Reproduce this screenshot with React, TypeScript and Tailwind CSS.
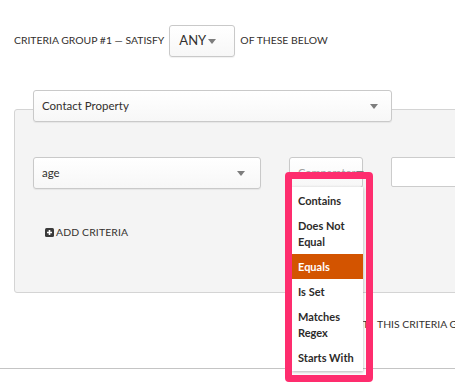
const font = { fontFamily: "Lato, 'Open Sans', sans-serif" };

function Caret() {
  return (
    <svg width="8" height="5" viewBox="0 0 8 5" className="shrink-0">
      <path d="M0 0 L8 0 L4 5 Z" fill="#7d7d7d" />
    </svg>
  );
}

function SelectBox({
  label,
  className,
  textClass,
}: {
  label: string;
  className: string;
  textClass: string;
}) {
  return (
    <div
      className={`flex items-center justify-between rounded-[3px] border border-[#c9c9c9] bg-gradient-to-b from-white to-[#f7f7f7] shadow-[0_1px_1px_rgba(0,0,0,0.06)] ${className}`}
    >
      <span className={`text-[#33302e] ${textClass}`}>{label}</span>
      <Caret />
    </div>
  );
}

export default function App() {
  const options = [
    { label: "Contains" },
    { label: "Does Not Equal" },
    { label: "Equals", active: true },
    { label: "Is Set" },
    { label: "Matches Regex" },
    { label: "Starts With" },
  ];

  return (
    <div
      className="relative h-[392px] w-[455px] overflow-hidden bg-white"
      style={font}
    >
      {/* Group header */}
      <div className="flex items-center pl-[14px] pt-[25px] text-[10.4px] text-[#33302e]">
        <span>CRITERIA GROUP #1 — SATISFY</span>
        <SelectBox
          label="ANY"
          className="ml-[5px] mr-[5px] h-[32px] w-[66px] pl-[9px] pr-[18px]"
          textClass="text-[13px]"
        />
        <span>OF THESE BELOW</span>
      </div>

      {/* Criteria panel */}
      <div className="ml-[14px] mt-[52px] h-[184px] w-[460px] rounded-l-[3px] border border-[#d4d4d4] bg-[#f4f4f4]">
        <SelectBox
          label="Contact Property"
          className="relative z-10 ml-[18px] mt-[-20px] h-[32px] w-[359px] pl-[8px] pr-[13px]"
          textClass="text-[11.5px]"
        />

        <div className="mt-[35px] flex items-start">
          <SelectBox
            label="age"
            className="ml-[18px] h-[32px] w-[228px] pl-[8px] pr-[15px]"
            textClass="text-[11.5px]"
          />

          <div className="relative ml-[28px]">
            <SelectBox
              label="Comparator"
              className="h-[31px] w-[74px] pl-[8px] pr-[6px] pt-[2px]"
              textClass="text-[11px] text-[#a0a0a0]"
            />

            {/* Highlight frame */}
            <div className="absolute left-[-4px] top-[15px] z-20 h-[210px] w-[88px] rounded-[4px] border-[7px] border-[#fe2d6e]" />

            {/* Open dropdown */}
            <div className="absolute left-[3px] top-[30px] z-10 w-[71px] bg-white py-[1px] shadow-[0_1px_3px_rgba(0,0,0,0.3)]">
              {options.map((o) => (
                <div
                  key={o.label}
                  className={`px-[6px] py-[4.5px] text-[11px] font-bold leading-[16px] ${
                    o.active ? "bg-[#d35400] text-white" : "text-[#2d2b2a]"
                  }`}
                >
                  {o.label}
                </div>
              ))}
            </div>
          </div>

          <div className="ml-[28px] h-[30px] w-[80px] rounded-l-[2px] border border-[#cccccc] bg-white" />
        </div>

        <div className="ml-[30px] mt-[36px] flex items-center gap-[2px] text-[10.4px] text-[#33302e]">
          <svg width="9" height="9" viewBox="0 0 9 9">
            <rect width="9" height="9" rx="1.5" fill="#3a3a3a" />
            <path d="M4.5 2v5M2 4.5h5" stroke="white" strokeWidth="1.6" />
          </svg>
          <span className="tracking-[0.15px]">ADD CRITERIA</span>
        </div>
      </div>

      {/* Group actions */}
      <div className="mt-[24px] flex whitespace-nowrap text-[10.4px] text-[#33302e]">
        <span className="w-[369px] shrink-0 text-right">RESET</span>
        <span className="ml-[8px]">THIS CRITERIA GROUP</span>
      </div>

      <div className="mt-[35px] h-px w-full bg-[#c4c4c4]" />
    </div>
  );
}
